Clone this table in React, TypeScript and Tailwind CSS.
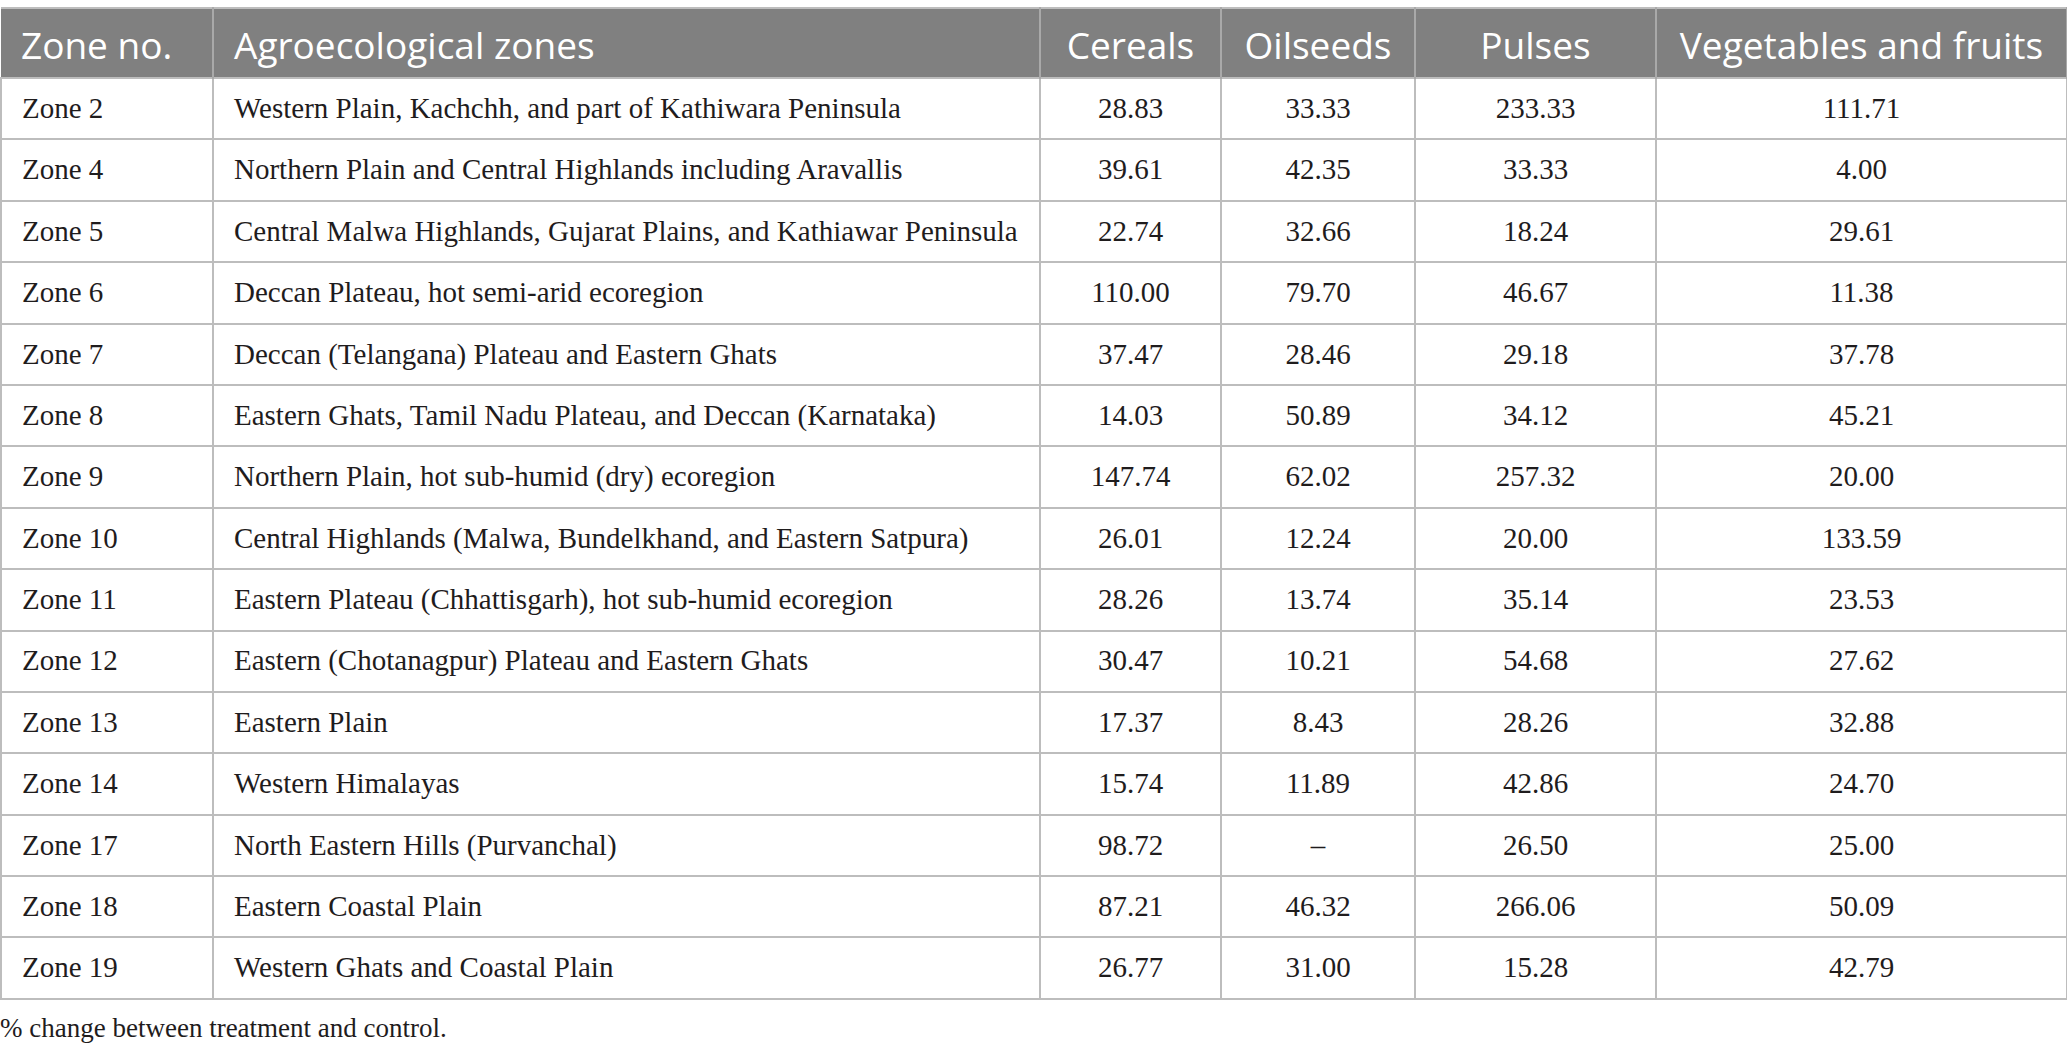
import React from 'react';

type Row = {
  zone: string;
  name: string;
  cereals: string;
  oilseeds: string;
  pulses: string;
  veg: string;
};

const rows: Row[] = [
  { zone: 'Zone 2', name: 'Western Plain, Kachchh, and part of Kathiwara Peninsula', cereals: '28.83', oilseeds: '33.33', pulses: '233.33', veg: '111.71' },
  { zone: 'Zone 4', name: 'Northern Plain and Central Highlands including Aravallis', cereals: '39.61', oilseeds: '42.35', pulses: '33.33', veg: '4.00' },
  { zone: 'Zone 5', name: 'Central Malwa Highlands, Gujarat Plains, and Kathiawar Peninsula', cereals: '22.74', oilseeds: '32.66', pulses: '18.24', veg: '29.61' },
  { zone: 'Zone 6', name: 'Deccan Plateau, hot semi-arid ecoregion', cereals: '110.00', oilseeds: '79.70', pulses: '46.67', veg: '11.38' },
  { zone: 'Zone 7', name: 'Deccan (Telangana) Plateau and Eastern Ghats', cereals: '37.47', oilseeds: '28.46', pulses: '29.18', veg: '37.78' },
  { zone: 'Zone 8', name: 'Eastern Ghats, Tamil Nadu Plateau, and Deccan (Karnataka)', cereals: '14.03', oilseeds: '50.89', pulses: '34.12', veg: '45.21' },
  { zone: 'Zone 9', name: 'Northern Plain, hot sub-humid (dry) ecoregion', cereals: '147.74', oilseeds: '62.02', pulses: '257.32', veg: '20.00' },
  { zone: 'Zone 10', name: 'Central Highlands (Malwa, Bundelkhand, and Eastern Satpura)', cereals: '26.01', oilseeds: '12.24', pulses: '20.00', veg: '133.59' },
  { zone: 'Zone 11', name: 'Eastern Plateau (Chhattisgarh), hot sub-humid ecoregion', cereals: '28.26', oilseeds: '13.74', pulses: '35.14', veg: '23.53' },
  { zone: 'Zone 12', name: 'Eastern (Chotanagpur) Plateau and Eastern Ghats', cereals: '30.47', oilseeds: '10.21', pulses: '54.68', veg: '27.62' },
  { zone: 'Zone 13', name: 'Eastern Plain', cereals: '17.37', oilseeds: '8.43', pulses: '28.26', veg: '32.88' },
  { zone: 'Zone 14', name: 'Western Himalayas', cereals: '15.74', oilseeds: '11.89', pulses: '42.86', veg: '24.70' },
  { zone: 'Zone 17', name: 'North Eastern Hills (Purvanchal)', cereals: '98.72', oilseeds: '–', pulses: '26.50', veg: '25.00' },
  { zone: 'Zone 18', name: 'Eastern Coastal Plain', cereals: '87.21', oilseeds: '46.32', pulses: '266.06', veg: '50.09' },
  { zone: 'Zone 19', name: 'Western Ghats and Coastal Plain', cereals: '26.77', oilseeds: '31.00', pulses: '15.28', veg: '42.79' },
];

const th = "border-x-2 border-[#a9a9a9] font-['Open_Sans',sans-serif] font-normal text-white text-[37px] leading-none whitespace-nowrap pt-[3px]";
const td = "border-2 border-[#bdbdbd] font-['Liberation_Serif',serif] text-[29px] text-[#1f1c1d] whitespace-nowrap";

export default function App() {
  return (
    <div className="min-h-screen bg-white pt-[7px] font-['Liberation_Serif',serif]">
      <table className="table-fixed border-collapse w-[2066px]">
        <colgroup>
          <col className="w-[212px]" />
          <col className="w-[827px]" />
          <col className="w-[181px]" />
          <col className="w-[194px]" />
          <col className="w-[241px]" />
          <col className="w-[411px]" />
        </colgroup>
        <thead>
          <tr className="h-[70px] bg-[#808080] border-t-2 border-[#bdbdbd]">
            <th className={`${th} text-left pl-[20px] border-l-0`}>Zone no.</th>
            <th className={`${th} text-left pl-[20px]`}>Agroecological zones</th>
            <th className={`${th} text-center`}>Cereals</th>
            <th className={`${th} text-center`}>Oilseeds</th>
            <th className={`${th} text-center`}>Pulses</th>
            <th className={`${th} text-center`}>Vegetables and fruits</th>
          </tr>
        </thead>
        <tbody>
          {rows.map((r) => (
            <tr key={r.zone} className="h-[61.4px]">
              <td className={`${td} pl-[20px]`}>{r.zone}</td>
              <td className={`${td} pl-[20px]`}>{r.name}</td>
              <td className={`${td} text-center`}>{r.cereals}</td>
              <td className={`${td} text-center`}>{r.oilseeds}</td>
              <td className={`${td} text-center`}>{r.pulses}</td>
              <td className={`${td} text-center`}>{r.veg}</td>
            </tr>
          ))}
        </tbody>
      </table>
      <p className="mt-[12px] text-[27px] leading-[32px] text-[#1f1c1d] font-['Liberation_Serif',serif]">
        % change between treatment and control.
      </p>
    </div>
  );
}
